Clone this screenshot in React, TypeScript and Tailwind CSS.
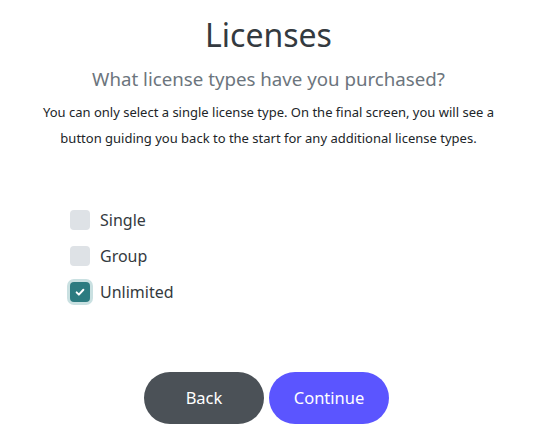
import { useState } from "react";

const OPTIONS = ["Single", "Group", "Unlimited"];

export default function App() {
  const [selected, setSelected] = useState("Unlimited");

  return (
    <div
      className="min-h-screen w-full bg-white text-[#212529]"
      style={{ fontFamily: '"Noto Sans", "Open Sans", sans-serif' }}
    >
      <div className="flex flex-col items-center pt-[11px]">
        <h1 className="text-[32px] leading-[48px] text-[#343a40]">Licenses</h1>
        <h2 className="mt-[6px] text-[18.7px] leading-[28px] text-[#6c757d]">
          What license types have you purchased?
        </h2>
        <p className="mt-[6px] w-[460px] text-center text-[13px] leading-[26px]">
          You can only select a single license type. On the final screen, you will see a button
          guiding you back to the start for any additional license types.
        </p>
      </div>

      <div className="mt-[59px] flex flex-col gap-[16px] pl-[70px]">
        {OPTIONS.map((opt) => {
          const checked = selected === opt;
          return (
            <label key={opt} className="flex cursor-pointer items-center gap-[10px]">
              <button
                type="button"
                onClick={() => setSelected(opt)}
                className={
                  checked
                    ? "flex h-[20px] w-[20px] items-center justify-center rounded-[4px] bg-[#2c7b80] shadow-[0_0_0_3px_#c9e0e1]"
                    : "h-[20px] w-[20px] rounded-[4px] bg-[#dee2e6]"
                }
              >
                {checked && (
                  <svg viewBox="0 0 16 16" className="h-[12px] w-[12px]" fill="none">
                    <path
                      d="M3.5 8.5l3 3 6-6.5"
                      stroke="#fff"
                      strokeWidth="2.6"
                      strokeLinecap="round"
                      strokeLinejoin="round"
                    />
                  </svg>
                )}
              </button>
              <span className="text-[16px] leading-[20px] text-[#343a40]">{opt}</span>
            </label>
          );
        })}
      </div>

      <div className="mt-[70px] flex justify-center gap-[5px] pr-[4px]">
        <button
          type="button"
          className="h-[52px] w-[120px] rounded-full bg-[#4b5157] text-[16.5px] text-white"
        >
          Back
        </button>
        <button
          type="button"
          className="h-[52px] w-[120px] rounded-full bg-[#5b55ff] text-[16.5px] text-white"
        >
          Continue
        </button>
      </div>
    </div>
  );
}
